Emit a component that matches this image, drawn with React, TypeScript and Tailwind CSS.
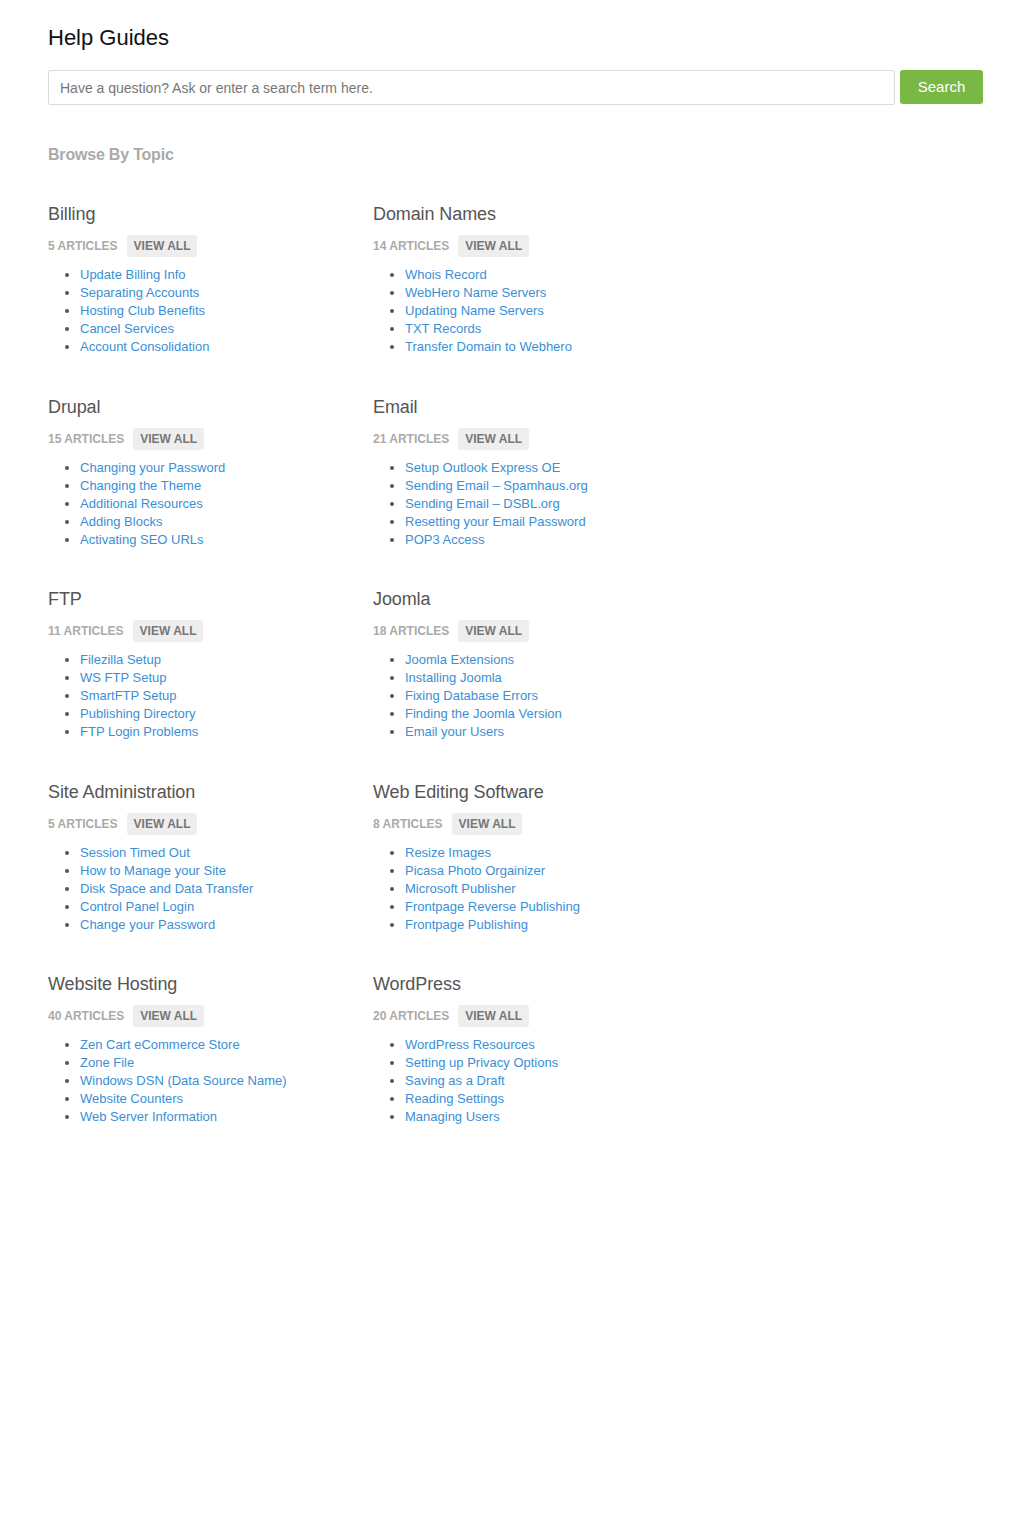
const topics = [
  {
    title: "Billing",
    count: 5,
    links: ["Update Billing Info", "Separating Accounts", "Hosting Club Benefits", "Cancel Services", "Account Consolidation"],
  },
  {
    title: "Domain Names",
    count: 14,
    links: ["Whois Record", "WebHero Name Servers", "Updating Name Servers", "TXT Records", "Transfer Domain to Webhero"],
  },
  {
    title: "Drupal",
    count: 15,
    links: ["Changing your Password", "Changing the Theme", "Additional Resources", "Adding Blocks", "Activating SEO URLs"],
  },
  {
    title: "Email",
    count: 21,
    links: [
      "Setup Outlook Express OE",
      "Sending Email – Spamhaus.org",
      "Sending Email – DSBL.org",
      "Resetting your Email Password",
      "POP3 Access",
    ],
  },
  {
    title: "FTP",
    count: 11,
    links: ["Filezilla Setup", "WS FTP Setup", "SmartFTP Setup", "Publishing Directory", "FTP Login Problems"],
  },
  {
    title: "Joomla",
    count: 18,
    links: ["Joomla Extensions", "Installing Joomla", "Fixing Database Errors", "Finding the Joomla Version", "Email your Users"],
  },
  {
    title: "Site Administration",
    count: 5,
    links: ["Session Timed Out", "How to Manage your Site", "Disk Space and Data Transfer", "Control Panel Login", "Change your Password"],
  },
  {
    title: "Web Editing Software",
    count: 8,
    links: ["Resize Images", "Picasa Photo Orgainizer", "Microsoft Publisher", "Frontpage Reverse Publishing", "Frontpage Publishing"],
  },
  {
    title: "Website Hosting",
    count: 40,
    links: [
      "Zen Cart eCommerce Store",
      "Zone File",
      "Windows DSN (Data Source Name)",
      "Website Counters",
      "Web Server Information",
    ],
  },
  {
    title: "WordPress",
    count: 20,
    links: ["WordPress Resources", "Setting up Privacy Options", "Saving as a Draft", "Reading Settings", "Managing Users"],
  },
]

export default function App() {
  return (
    <div className="min-h-[1525px] bg-white font-['Liberation_Sans',Arial,sans-serif] text-[13px]">
      <div className="w-[935px] ml-12 pt-[25px]">
        <h1 className="text-[22px] leading-[26px] text-[#111]">Help Guides</h1>

        {/* Search */}
        <div className="flex gap-[5px] mt-[19px]">
          <input
            type="text"
            placeholder="Have a question? Ask or enter a search term here."
            className="flex-1 h-[35px] border border-[#dcdcdc] rounded-[2px] px-[11px] text-[14px] text-[#333] placeholder:text-[#777] outline-none"
          />
          <button className="w-[83px] h-[34px] pt-px bg-[#79b844] rounded-[3px] text-white text-[15px]">Search</button>
        </div>

        <h2 className="mt-[40px] text-[16px] leading-[20px] font-bold text-[#aaa] tracking-[-0.2px]">Browse By Topic</h2>

        {/* Topics */}
        <div className="grid grid-cols-[325px_325px] mt-[38px] gap-y-[39.5px]">
          {topics.map((topic) => (
            <div key={topic.title}>
              <h3 className="text-[18px] leading-[22px] text-[#555] tracking-[-0.1px]">{topic.title}</h3>
              <div className="flex items-center mt-[10px] h-[22px]">
                <span className="text-[12px] font-bold text-[#aaa] uppercase">{topic.count} Articles</span>
                <a
                  href="#"
                  className="ml-[9px] h-[22px] px-[7px] flex items-center bg-[#eee] rounded-[3px] text-[12px] font-bold text-[#777] uppercase"
                >
                  View All
                </a>
              </div>
              <ul className="mt-[9px] pl-[32px] list-disc marker:text-[#555]">
                {topic.links.map((link) => (
                  <li key={link} className="leading-[18px]">
                    <a href="#" className="text-[#3a8fd6]">
                      {link}
                    </a>
                  </li>
                ))}
              </ul>
            </div>
          ))}
        </div>
      </div>
    </div>
  )
}
